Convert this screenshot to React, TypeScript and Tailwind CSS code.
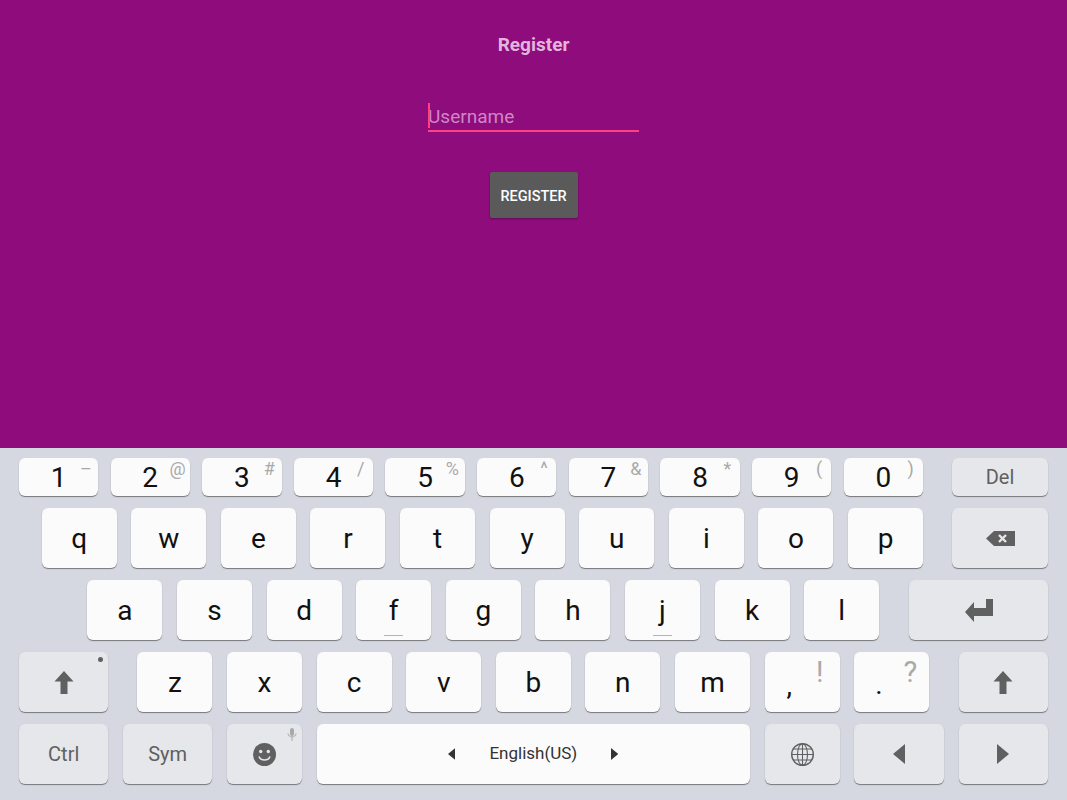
import type { ReactNode } from 'react';

const numberKeys = [
  ['1', '–'],
  ['2', '@'],
  ['3', '#'],
  ['4', '/'],
  ['5', '%'],
  ['6', '^'],
  ['7', '&'],
  ['8', '*'],
  ['9', '('],
  ['0', ')'],
];

function Key({ className, children }: { className: string; children?: ReactNode }) {
  return (
    <div
      className={`relative flex shrink-0 items-center justify-center rounded-[6px] shadow-[0_1px_1px_rgba(0,0,0,0.45)] ${className}`}
    >
      {children}
    </div>
  );
}

function Letter({ label, mark }: { label: string; mark?: boolean }) {
  return (
    <Key className="h-[60px] w-[75px] bg-[#fbfbfb] pt-[2px] text-[28px] text-[#111]">
      {label}
      {mark && <span className="absolute bottom-[4px] left-[28px] h-px w-[19px] bg-[#b4b4b4]" />}
    </Key>
  );
}

function ArrowUp() {
  return (
    <svg width="20" height="23" viewBox="0 0 20 23" fill="#606060">
      <path d="M10 0 L19.5 10.5 H13.5 V23 H6.5 V10.5 H0.5 Z" />
    </svg>
  );
}

function Triangle({ dir, size = 20, color = '#606060' }: { dir: 'left' | 'right'; size?: number; color?: string }) {
  return (
    <svg width={size * 0.6} height={size} viewBox="0 0 12 20" fill={color}>
      {dir === 'left' ? <path d="M12 0 V20 L0 10 Z" /> : <path d="M0 0 V20 L12 10 Z" />}
    </svg>
  );
}

export default function App() {
  return (
    <div className="flex h-screen flex-col overflow-hidden font-['Roboto',sans-serif]">
      <main className="flex h-[448px] shrink-0 flex-col items-center bg-[#8e0c7c]">
        <h1 className="mt-[33px] text-[19px] leading-[24px] font-bold text-[#e3b5dc]">Register</h1>
        <div className="relative mt-[45px] h-[30px] w-[211px] border-b-2 border-[#ff4081]">
          <span className="absolute top-[1px] left-0 h-[25px] w-[2px] bg-[#ff4081]" />
          <input
            placeholder="Username"
            className="mt-px h-[28px] w-full bg-transparent text-[19px] leading-[28px] outline-none placeholder:text-[#cf86c5]"
          />
        </div>
        <button className="mt-[40px] h-[46px] w-[88px] rounded-[2px] bg-[#5a5a5a] pt-[3px] text-[14.5px] font-medium text-white shadow-[0_1px_2px_rgba(0,0,0,0.3)]">
          REGISTER
        </button>
      </main>

      <section className="flex flex-1 flex-col gap-[12px] bg-[#d5d8e0] pt-[10px] pr-[19px] pl-[18.9px]">
        <div className="flex">
          <div className="flex gap-[12.25px]">
            {numberKeys.map(([num, hint]) => (
              <Key key={num} className="h-[38px] w-[79.4px] bg-[#fbfbfb] pt-[2px] text-[28px] text-[#111]">
                {num}
                <span className="absolute top-0 left-[55px] w-[24px] text-center text-[18px] leading-[22px] text-[#a9a9a9]">
                  {hint}
                </span>
              </Key>
            ))}
          </div>
          <Key className="ml-auto h-[38px] w-[96px] bg-[#e6e7eb] text-[20px] text-[#606060]">Del</Key>
        </div>

        <div className="flex pl-[22.8px]">
          <div className="flex gap-[14.6px]">
            {'qwertyuiop'.split('').map((c) => (
              <Letter key={c} label={c} />
            ))}
          </div>
          <Key className="ml-auto h-[60px] w-[96px] bg-[#e6e7eb]">
            <svg width="29" height="15" viewBox="0 0 29 15">
              <path d="M0 7.5 L8 0 H29 V15 H8 Z" fill="#606060" />
              <path d="M13 4 L20 11 M20 4 L13 11" stroke="#e6e7eb" strokeWidth="2.4" />
            </svg>
          </Key>
        </div>

        <div className="flex pl-[68.5px]">
          <div className="flex gap-[14.6px]">
            {'asdfghjkl'.split('').map((c) => (
              <Letter key={c} label={c} mark={c === 'f' || c === 'j'} />
            ))}
          </div>
          <Key className="ml-auto h-[60px] w-[139px] bg-[#e6e7eb]">
            <svg width="28" height="23" viewBox="0 0 28 23" fill="#606060">
              <path d="M21 0 H28 V17 H9 V23 L0 13 L9 3 V9 H21 Z" />
            </svg>
          </Key>
        </div>

        <div className="flex">
          <Key className="h-[60px] w-[89.6px] bg-[#e6e7eb]">
            <ArrowUp />
            <span className="absolute top-[5px] right-[5px] h-[5px] w-[5px] rounded-full bg-[#606060]" />
          </Key>
          <div className="ml-[28.9px] flex gap-[14.6px]">
            {'zxcvbnm'.split('').map((c) => (
              <Letter key={c} label={c} />
            ))}
            <Key className="h-[60px] w-[75px] bg-[#fbfbfb] text-[#111]">
              <span className="absolute top-[20px] left-[22px] text-[28px] leading-[28px]">,</span>
              <span className="absolute top-[3px] right-[16px] text-[29px] leading-[34px] text-[#a9a9a9]">!</span>
            </Key>
            <Key className="h-[60px] w-[75px] bg-[#fbfbfb] text-[#111]">
              <span className="absolute top-[19px] left-[21px] text-[28px] leading-[28px]">.</span>
              <span className="absolute top-[3px] right-[12px] text-[29px] leading-[34px] text-[#a9a9a9]">?</span>
            </Key>
          </div>
          <Key className="ml-auto h-[60px] w-[89.5px] bg-[#e6e7eb]">
            <ArrowUp />
          </Key>
        </div>

        <div className="flex">
          <Key className="h-[60px] w-[89.6px] bg-[#e6e7eb] text-[20px] text-[#606060]">Ctrl</Key>
          <Key className="ml-[14.4px] h-[60px] w-[89.6px] bg-[#e6e7eb] text-[20px] text-[#606060]">Sym</Key>
          <Key className="ml-[14.5px] h-[60px] w-[75px] bg-[#e6e7eb]">
            <svg width="23" height="23" viewBox="0 0 23 23">
              <circle cx="11.5" cy="11.5" r="11.5" fill="#606060" />
              <circle cx="7.7" cy="8.5" r="1.7" fill="#e6e7eb" />
              <circle cx="15.3" cy="8.5" r="1.7" fill="#e6e7eb" />
              <path d="M6 13.5 C7.5 18 15.5 18 17 13.5" fill="none" stroke="#e6e7eb" strokeWidth="1.5" />
            </svg>
            <svg className="absolute top-[4px] right-[5px]" width="10" height="13" viewBox="0 0 10 13" fill="none">
              <rect x="3" y="0" width="4" height="8" rx="2" fill="#a9a9a9" />
              <path d="M1 5.5 C1 10 9 10 9 5.5 M5 9 V13" stroke="#a9a9a9" strokeWidth="1" />
            </svg>
          </Key>
          <Key className="ml-[14.7px] h-[60px] w-[433.4px] gap-[34px] bg-[#fbfbfb] text-[17px] text-[#333]">
            <Triangle dir="left" size={12} color="#333" />
            <span>English(US)</span>
            <Triangle dir="right" size={12} color="#333" />
          </Key>
          <Key className="ml-[14.7px] h-[60px] w-[75px] bg-[#e6e7eb]">
            <svg width="23" height="23" viewBox="0 0 23 23" fill="none" stroke="#606060" strokeWidth="1.1">
              <circle cx="11.5" cy="11.5" r="10.8" strokeWidth="1.4" />
              <ellipse cx="11.5" cy="11.5" rx="5" ry="10.8" />
              <path d="M11.5 0.7 V22.3 M0.7 11.5 H22.3 M2.4 6 H20.6 M2.4 17 H20.6" />
            </svg>
          </Key>
          <Key className="ml-[14.5px] h-[60px] w-[89.6px] bg-[#e6e7eb]">
            <Triangle dir="left" />
          </Key>
          <Key className="ml-auto h-[60px] w-[89.5px] bg-[#e6e7eb]">
            <Triangle dir="right" />
          </Key>
        </div>
      </section>
    </div>
  );
}
